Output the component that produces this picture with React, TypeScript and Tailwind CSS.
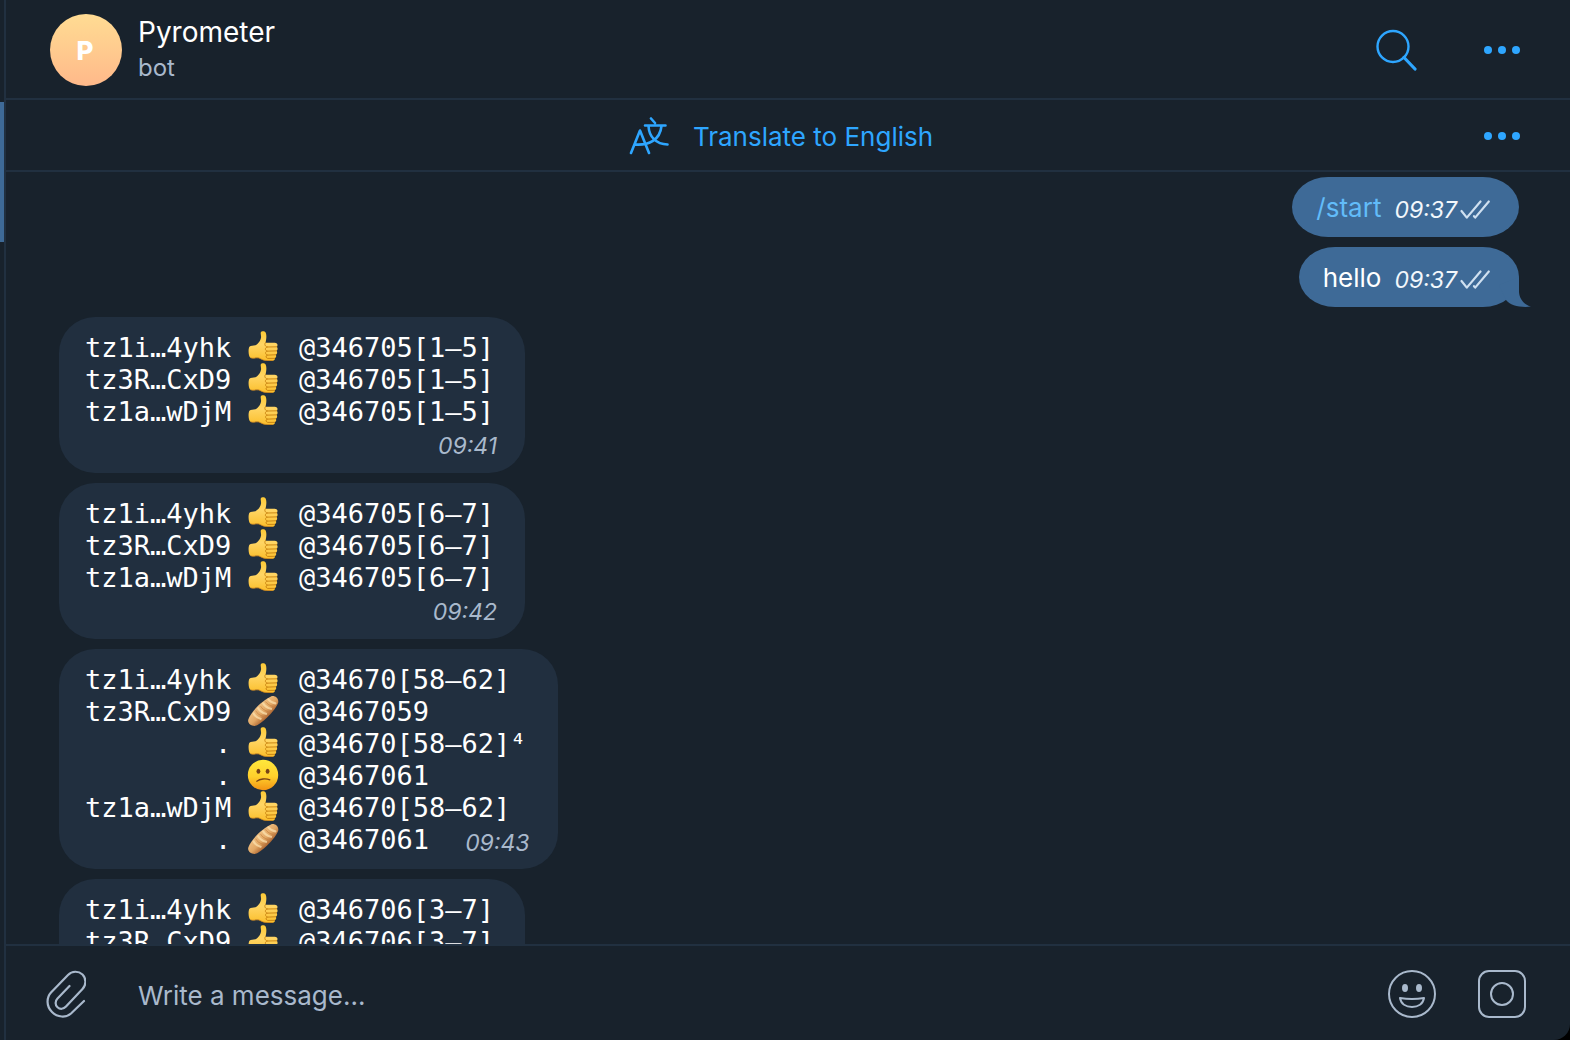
import React from "react";

type Row = { name?: string; icon: "thumb" | "bread" | "confused"; range: string };
type Report = { rows: Row[]; time: string; inline?: boolean };

const three = (range: string): Row[] => [
  { name: "tz1i…4yhk", icon: "thumb", range },
  { name: "tz3R…CxD9", icon: "thumb", range },
  { name: "tz1a…wDjM", icon: "thumb", range },
];

const reports: Report[] = [
  { rows: three("@346705[1–5]"), time: "09:41" },
  { rows: three("@346705[6–7]"), time: "09:42" },
  {
    rows: [
      { name: "tz1i…4yhk", icon: "thumb", range: "@34670[58–62]" },
      { name: "tz3R…CxD9", icon: "bread", range: "@3467059" },
      { icon: "thumb", range: "@34670[58–62]⁴" },
      { icon: "confused", range: "@3467061" },
      { name: "tz1a…wDjM", icon: "thumb", range: "@34670[58–62]" },
      { icon: "bread", range: "@3467061" },
    ],
    time: "09:43",
    inline: true,
  },
  { rows: three("@346706[3–7]").slice(0, 2), time: "" },
];

function Gradients() {
  return (
    <svg width="0" height="0" className="absolute" aria-hidden="true">
      <defs>
        <linearGradient id="thumbFill" x1="0" y1="0" x2="0" y2="1">
          <stop offset="0" stopColor="#fcc934" />
          <stop offset="0.45" stopColor="#ffd564" />
          <stop offset="1" stopColor="#fbbf2c" />
        </linearGradient>
        <linearGradient id="faceFill" x1="0" y1="0" x2="0" y2="1">
          <stop offset="0" stopColor="#ffe83c" />
          <stop offset="0.55" stopColor="#ffd02c" />
          <stop offset="1" stopColor="#f39414" />
        </linearGradient>
        <linearGradient id="breadFill" x1="0.3" y1="0.3" x2="0.7" y2="0.7">
          <stop offset="0" stopColor="#f0c184" />
          <stop offset="0.55" stopColor="#e2a764" />
          <stop offset="1" stopColor="#a55c2a" />
        </linearGradient>
      </defs>
    </svg>
  );
}

function Thumb() {
  return (
    <svg viewBox="-0.5 1 33 33" className="size-8" role="img" aria-label="👍">
      <path
        d="M2 17.2C3.4 15.4 6 16.5 8.2 15.6C11 14.3 13.6 10.6 14 7.6C14.3 5 12.6 2.6 14.6 1.6C16.2.8 18.4 1.2 19 3.2C20 6.2 19.2 10.2 18.6 13L28 13C31.2 13.1 31.6 16 30.2 17.2C31.4 18.4 31.4 20.4 29.9 21.4C31 22.6 30.8 24.6 29.2 25.4C30 26.6 29.6 28.4 28.2 29C28.6 30.8 27 31.6 25.4 31.6L19.4 31.5C15.6 31.4 14 29.6 11.8 28.8C8.6 28.2 5.6 29.8 3 28.6C.8 27.2.6 19.4 2 17.2Z"
        fill="url(#thumbFill)"
      />
      <path
        d="M18.6 12.9C16.8 14.8 18.4 17.2 20.4 17.4M30.2 17.3L20.2 17.5C17.6 18.6 18 21.2 20.2 21.7M29.9 21.5L20 21.8C17.8 22.8 18.4 25.3 20.4 25.8M29.2 25.5L20.2 25.9C18.4 26.9 19 28.7 20.8 29.3L28 29.2"
        fill="none"
        stroke="#c98412"
        strokeWidth="1"
        strokeLinecap="round"
      />
      <path
        d="M3.4 28.7C6 29.6 8.8 28.2 11.8 28.8C14 29.6 15.6 31.2 19.4 31.4H26"
        fill="none"
        stroke="#d78a1c"
        strokeWidth="0.8"
      />
    </svg>
  );
}

function Bread() {
  return (
    <svg viewBox="0 0 32 32" className="size-8" role="img" aria-label="🥖">
      <path
        d="M1.4 24.2C3.8 16.6 16.4 4.4 24 1.4C27.8 0 32.6 3.6 31 8.2C28.6 15 16.2 27.6 9.4 30.6C5.4 32-.2 28.8 1.4 24.2Z"
        fill="url(#breadFill)"
      />
      <path
        d="M21.4 4.4C23 6.6 25.4 7.8 28.4 8.4M16.2 8.4C17.8 11.2 20.4 13 24 13.8M11.2 13.2C12.6 15.8 15.2 17.8 19 18.8M6.6 18.4C7.8 20.8 10.2 22.8 13.6 23.8"
        fill="none"
        stroke="#fbe0ad"
        strokeOpacity="0.75"
        strokeWidth="2.2"
        strokeLinecap="round"
      />
      <path
        d="M18.6 6.8C20.4 9.2 22.6 10.6 26 11.4M13.6 11.2C15 13.8 17.6 15.6 21.2 16.6M8.8 16C10 18.4 12.6 20.4 16.2 21.4"
        fill="none"
        stroke="#c07a3a"
        strokeOpacity="0.6"
        strokeWidth="1"
        strokeLinecap="round"
      />
    </svg>
  );
}

function Confused() {
  return (
    <svg viewBox="0 0 32 32" className="size-8" role="img" aria-label="😕">
      <circle cx="16" cy="16" r="15.2" fill="url(#faceFill)" />
      <ellipse cx="11.4" cy="12.2" rx="1.9" ry="2.5" fill="#764216" />
      <ellipse cx="20.6" cy="12.2" rx="1.9" ry="2.5" fill="#764216" />
      <path
        d="M9.8 22.2C13 19.8 18.6 19.2 22.8 20.8"
        fill="none"
        stroke="#764216"
        strokeWidth="1.3"
        strokeLinecap="round"
      />
    </svg>
  );
}

const icons = { thumb: Thumb, bread: Bread, confused: Confused };

function Ticks() {
  return (
    <svg viewBox="0 0 30 20" className="h-5 w-[30px]" role="img" aria-label="Read">
      <path
        d="M1.5 11L6.8 17.6L20.5 1.5M14 16.2L15.2 17.6L28.8 1.5"
        fill="none"
        stroke="#cfe0f0"
        strokeWidth="2.2"
        strokeLinecap="round"
        strokeLinejoin="round"
      />
    </svg>
  );
}

function Dots() {
  return (
    <svg viewBox="0 0 36 8" className="h-2 w-9" fill="#2ea6ff" aria-hidden="true">
      <circle cx="4" cy="4" r="4" />
      <circle cx="18" cy="4" r="4" />
      <circle cx="32" cy="4" r="4" />
    </svg>
  );
}

function Sent({ text, command, tail }: { text: string; command?: boolean; tail?: boolean }) {
  return (
    <div className="relative flex h-[60px] shrink-0 items-center self-end rounded-[36px/30px] bg-[#3e6a97] pr-[29px] pl-6">
      {command ? (
        <a href="#start" className="text-[#62bcf9]">
          {text}
        </a>
      ) : (
        <span className="text-white">{text}</span>
      )}
      <time className="mt-1.5 ml-[13px] text-[23px] text-[#f2f7fc] italic">09:37</time>
      <span className="mt-1.5 ml-[3px]">
        <Ticks />
      </span>
      {tail && (
        <svg viewBox="0 0 32 30" className="absolute -right-3 bottom-0 h-[30px] w-8" aria-hidden="true">
          <path d="M20 0V15C20.5 22 25 27.5 32 29.6C22 31 11 28.5 7 23L0 8Z" fill="#3e6a97" />
        </svg>
      )}
    </div>
  );
}

function Received({ rows, time, inline }: Report) {
  return (
    <div className="flex shrink-0 flex-col self-start rounded-[36px] bg-[#212f3f] py-3.5 pr-7 pl-[26px]">
      {rows.map((row, i) => {
        const Icon = icons[row.icon];
        return (
          <div
            key={i}
            className="grid h-8 grid-cols-[160px_54px_auto] items-center pr-[3px] font-['DejaVu_Sans_Mono',monospace] text-[27px] leading-8 whitespace-pre text-white"
          >
            <span>{row.name ?? "        ."}</span>
            <span className="pb-0.5 pl-0.5">
              <Icon />
            </span>
            <span>{row.range}</span>
          </div>
        );
      })}
      <time
        className={
          inline
            ? "-mt-8 h-8 self-end pt-1 text-[23px] leading-8 text-[#a9b9cc] italic"
            : "h-8 self-end pt-[3px] text-[23px] leading-8 text-[#a9b9cc] italic"
        }
      >
        {time}
      </time>
    </div>
  );
}

export default function App() {
  return (
    <div className="h-screen bg-black">
      <Gradients />
      <div className="flex h-full overflow-hidden rounded-br-[16px] bg-[#18222c] font-[Inter,sans-serif] text-[26px]">
        <aside className="w-1 shrink-0 pt-[102px]">
          <div className="h-[140px] bg-[#3e6a97]" />
        </aside>
        <main className="flex min-w-0 flex-1 flex-col border-l-2 border-[#213040]">
          <header className="flex h-[100px] shrink-0 items-center border-b-2 border-[#213040] pt-0.5 pr-[50px] pl-11">
            <div className="flex size-[72px] items-center justify-center rounded-full bg-linear-to-b from-[#ffdc93] to-[#ffb98a] pr-0.5 text-[26px] font-extrabold text-white">
              P
            </div>
            <div className="ml-4">
              <h1 className="text-[28px] leading-9 text-white">Pyrometer</h1>
              <p className="text-2xl leading-9 text-[#a9b9cc]">bot</p>
            </div>
            <button type="button" aria-label="Search" className="ml-auto">
              <svg viewBox="0 0 42 42" className="size-[42px]" fill="none" stroke="#2ea6ff" strokeLinecap="round">
                <circle cx="17" cy="17.5" r="15.5" strokeWidth="2.4" />
                <path d="M28 28.5L39 40" strokeWidth="3.2" />
              </svg>
            </button>
            <button type="button" aria-label="Chat menu" className="ml-[66px]">
              <Dots />
            </button>
          </header>

          <div className="flex h-[72px] shrink-0 items-center border-b-2 border-[#213040] pt-0.5 pr-[50px] pl-[72px]">
            <button type="button" className="flex flex-1 items-center justify-center gap-6 text-[#2ea6ff]">
              <svg
                viewBox="0 0 40 38"
                className="h-[38px] w-10"
                fill="none"
                stroke="#2ea6ff"
                strokeWidth="2.6"
                strokeLinecap="round"
                strokeLinejoin="round"
                aria-hidden="true"
              >
                <path d="M2 36L11 13.5L20 36M6 27.5C20 28.5 31 23 32.5 9M16 8.5H36.5M22 1.5L26 6M19.5 9C20 19.5 27 27.5 38.5 27.5" />
              </svg>
              <span>Translate to English</span>
            </button>
            <button type="button" aria-label="Translation options">
              <Dots />
            </button>
          </div>

          <section className="flex min-h-0 flex-1 flex-col gap-2.5 overflow-hidden pt-[5px] pr-[51px] pl-[53px]">
            <Sent text="/start" command />
            <Sent text="hello" tail />
            {reports.map((r) => (
              <Received key={r.rows[0].range} {...r} />
            ))}
          </section>

          <footer className="flex h-24 shrink-0 items-center border-t-2 border-[#213040] pt-0.5 pr-11 pl-10">
            <button type="button" aria-label="Attach file">
              <svg
                viewBox="0 0 40 48"
                className="h-12 w-10"
                fill="none"
                stroke="#a9b9cc"
                strokeWidth="2.2"
                strokeLinecap="round"
              >
                <path d="M38 31L25 43.5C20 48 11.5 47.5 6 42C0 36 .5 27.5 5 22.5L22 5C26 .7 32.5.8 36.5 4.5C40.5 8.6 40.3 15 36.5 19L20 36.5C17.5 39.3 14 39.5 11.5 37.2C9 34.8 9 31 11.5 28.5L23.5 16" />
              </svg>
            </button>
            <input
              type="text"
              aria-label="Message"
              placeholder="Write a message..."
              className="ml-[52px] min-w-0 flex-1 bg-transparent pt-0.5 text-white outline-none placeholder:text-[#a9b9cc]"
            />
            <button type="button" aria-label="Emoji">
              <svg viewBox="0 0 48 48" className="size-12" fill="none" stroke="#a9b9cc" strokeWidth="2">
                <circle cx="24" cy="24" r="23" />
                <ellipse cx="17" cy="18" rx="3" ry="4" fill="#a9b9cc" stroke="none" />
                <ellipse cx="31" cy="18" rx="3" ry="4" fill="#a9b9cc" stroke="none" />
                <path d="M12 28C20 29.3 28 29.3 36 28C35 34 30 37 24 37C18 37 13 34 12 28Z" strokeLinejoin="round" />
              </svg>
            </button>
            <button type="button" aria-label="Record video message" className="ml-[42px]">
              <svg viewBox="0 0 48 48" className="size-12" fill="none" stroke="#a9b9cc" strokeWidth="2">
                <rect x="1" y="1" width="46" height="46" rx="10" />
                <circle cx="24" cy="24" r="11" />
              </svg>
            </button>
          </footer>
        </main>
      </div>
    </div>
  );
}
